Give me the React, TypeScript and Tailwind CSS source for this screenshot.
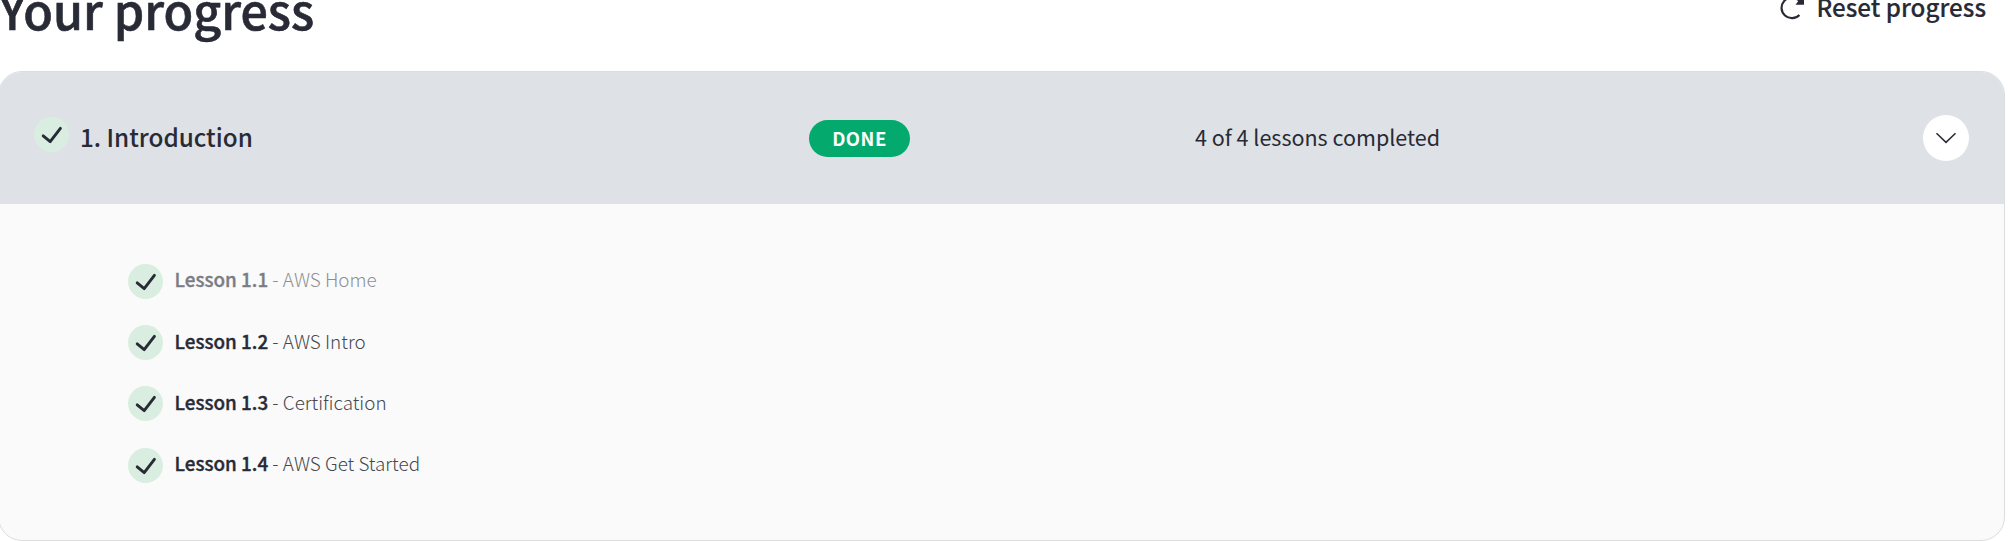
const lessons = [
  { id: "1.1", title: "AWS Home", muted: true },
  { id: "1.2", title: "AWS Intro", muted: false },
  { id: "1.3", title: "Certification", muted: false },
  { id: "1.4", title: "AWS Get Started", muted: false },
];

function CheckBadge() {
  return (
    <svg viewBox="0 0 35 35" className="size-[35px] shrink-0" aria-hidden="true">
      <circle cx="17.5" cy="17.5" r="17.5" fill="#d9eee1" />
      <path d="M9.2 18.9 L16.2 24.6 L26.4 11.3" fill="none" stroke="#282a35" strokeWidth="2.9" strokeLinecap="round" strokeLinejoin="round" />
    </svg>
  );
}

export default function App() {
  return (
    <main className="h-[541px] w-[2008px] overflow-hidden bg-white font-['Noto_Sans_CJK_SC',sans-serif] text-[#282a35]">
      <header className="flex h-[71px] items-start justify-between pr-[22px]">
        <h1 className="-ml-px text-[48.4px] leading-[19px] font-medium whitespace-nowrap [-webkit-text-stroke:0.6px_#282a35]">Your progress</h1>
        <button className="flex items-start gap-[11px] text-[24.2px] leading-[13px] font-medium whitespace-nowrap [-webkit-text-stroke:0.15px_#282a35]">
          <svg viewBox="0 0 26 20" className="h-[20px] w-[26px]" aria-hidden="true">
            <path d="M20.4 14.9 A10.3 10.3 0 1 1 19.5 0" fill="none" stroke="#282a35" strokeWidth="2.2" />
            <path d="M25 -4 V4.8 H16.5 L19 1.5 V-4 Z" fill="#282a35" />
          </svg>
          <span>Reset progress</span>
        </button>
      </header>
      <section className="-ml-[2px] h-[470px] w-[2007px] overflow-hidden rounded-[24px] border border-[#dcdddf] bg-[#fafafa]">
        <div className="grid h-[132px] grid-cols-[775px_386px_1fr_auto] items-center bg-[#dee1e6] pr-[35px] pl-[35px]">
          <div className="flex items-center gap-[11px]">
            <span className="-mt-[7px]"><CheckBadge /></span>
            <h2 className="-mt-[2px] text-[24.3px] leading-[30px] font-medium">1. Introduction</h2>
          </div>
          <span className="flex h-[37px] w-[101px] items-center justify-center rounded-full bg-[#04aa6d] text-[18.5px] leading-[20px] font-bold tracking-[0.5px] text-white">DONE</span>
          <span className="-mt-[3px] text-[21.5px] leading-[30px]">4 of 4 lessons completed</span>
          <button className="flex size-[46px] items-center justify-center rounded-full bg-white" aria-label="Collapse">
            <svg viewBox="0 0 22 12" className="h-[12px] w-[22px]" aria-hidden="true">
              <path d="M1.5 1.2 L11 10.4 L20.5 1.2" fill="none" stroke="#282a35" strokeWidth="1.5" />
            </svg>
          </button>
        </div>
        <ul className="flex flex-col pt-[60px] pl-[129px]">
          {lessons.map((l) => (
            <li key={l.id} className="flex h-[61.2px] items-start gap-[11.5px]">
              <CheckBadge />
              <p className={l.muted ? "pt-[0.4px] text-[18.85px] leading-[30px] font-extralight opacity-60" : "pt-[0.4px] text-[18.85px] leading-[30px] font-extralight"}>
                <span className="font-medium [-webkit-text-stroke:0.35px_#282a35]">Lesson {l.id}</span>
                <span className="text-[#45474f]"> - {l.title}</span>
              </p>
            </li>
          ))}
        </ul>
      </section>
    </main>
  );
}
